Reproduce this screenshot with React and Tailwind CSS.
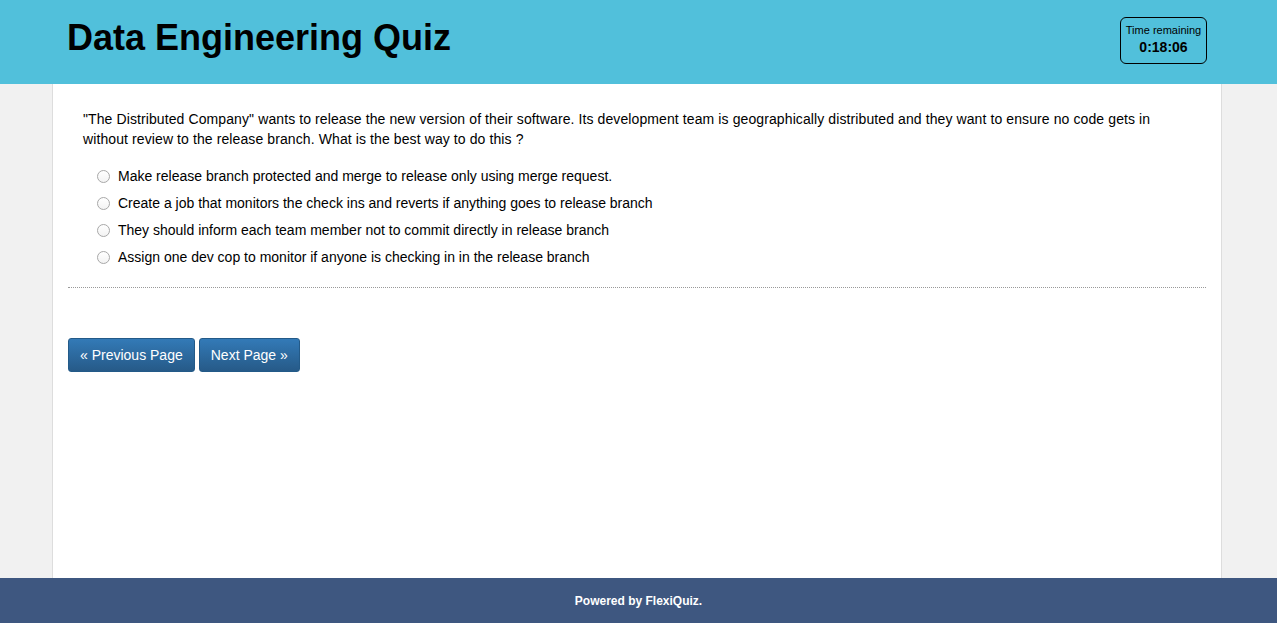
export default function App() {
  const options = [
    "Make release branch protected and merge to release only using merge request.",
    "Create a job that monitors the check ins and reverts if anything goes to release branch",
    "They should inform each team member not to commit directly in release branch",
    "Assign one dev cop to monitor if anyone is checking in in the release branch",
  ];
  return (
    <div
      className="flex flex-col h-[623px] bg-[#f1f1f1] text-black"
      style={{ fontFamily: '"Liberation Sans", Arial, sans-serif' }}
    >
      <header className="h-[84px] shrink-0 bg-[#51c0db]">
        <div className="w-[1170px] ml-[52px] px-[15px] h-full flex items-start justify-between">
          <h1 className="text-[36px] font-bold leading-none mt-[20px]">Data Engineering Quiz</h1>
          <div className="mt-[17px] w-[87px] h-[47px] border border-black rounded-[6px] flex flex-col items-center pt-[6px]">
            <div className="text-[11px] leading-[13px]">Time remaining</div>
            <div className="text-[14px] font-bold leading-[17px] mt-[2px]">0:18:06</div>
          </div>
        </div>
      </header>
      <main className="flex-1 w-[1170px] ml-[52px] bg-white border-x border-[#dddddd] px-[15px]">
        <div className="pt-[25px] pl-[15px] pr-[40px] text-[14px] leading-[20px]">
          <p className="tracking-[0.1px]">
            "The Distributed Company" wants to release the new version of their software. Its development team is geographically distributed and they want to ensure no code gets in without review to the release branch. What is the best way to do this ?
          </p>
          <div className="mt-[17px] flex flex-col gap-[7px] pl-[14px]">
            {options.map((o) => (
              <label key={o} className="flex items-center h-[20px]">
                <span className="w-[13px] h-[13px] rounded-full border border-[#a8a8a8] bg-gradient-to-b from-white to-[#f3f3f3] mr-[8px] shrink-0"></span>
                <span>{o}</span>
              </label>
            ))}
          </div>
        </div>
        <div className="mt-[20px] border-t border-dotted border-[#999999]"></div>
        <div className="mt-[50px] flex gap-[4px]">
          <button className="h-[34px] px-[11px] rounded-[3px] border border-[#235a88] bg-gradient-to-b from-[#337ab7] to-[#265a88] text-white text-[14px]">« Previous Page</button>
          <button className="h-[34px] px-[11px] rounded-[3px] border border-[#235a88] bg-gradient-to-b from-[#337ab7] to-[#265a88] text-white text-[14px]">Next Page »</button>
        </div>
      </main>
      <footer className="h-[45px] shrink-0 bg-[#3e5780] flex items-center justify-center">
        <span className="text-white text-[12px] font-bold">Powered by FlexiQuiz.</span>
      </footer>
    </div>
  );
}
